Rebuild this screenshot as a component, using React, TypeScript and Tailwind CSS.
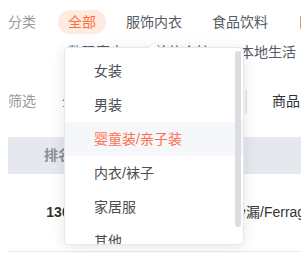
const FONT = { fontFamily: '"Liberation Sans", "Noto Sans CJK SC", sans-serif' };

const rowOne = ["服饰内衣", "食品饮料", "日用百货"];
const rowTwo = ["数码家电", "美妆个护", "本地生活"];
const options = ["女装", "男装", "婴童装/亲子装", "内衣/袜子", "家居服", "其他"];

export default function App() {
  return (
    <div className="relative h-[253px] w-[301px] overflow-hidden bg-white text-[14px]" style={FONT}>
      <div className="w-[420px] px-2 pt-[10px]">
        {/* 分类 */}
        <div className="flex">
          <div className="w-[50px] leading-6 text-[#999]">分类</div>
          <div className="flex flex-col gap-[6px]">
            <div className="flex gap-[10px]">
              <span className="h-6 rounded-full bg-[#fdebe2] px-[10px] leading-6 text-[#ff6f3d]">全部</span>
              {rowOne.map((c) => (
                <span key={c} className="h-6 px-[10px] leading-6 text-[#555a62]">
                  {c}
                </span>
              ))}
            </div>
            <div className="flex gap-[10px]">
              {rowTwo.map((c) => (
                <span key={c} className="h-6 px-[10px] leading-6 text-[#555a62]">
                  {c}
                </span>
              ))}
            </div>
          </div>
        </div>

        {/* 筛选 */}
        <div className="mt-[24px] flex h-[26px] items-center">
          <div className="w-[54px] text-[#999]">筛选</div>
          <div className="w-[183px] text-[#606266]">全部商品</div>
          <div className="h-[25px] w-[2px] rounded-full bg-[#e8eaee]" />
          <div className="ml-[25px] text-[#303133]">商品：</div>
        </div>

        {/* 表格 */}
        <div className="mt-[23px]">
          <div className="flex h-[37px] items-center bg-[#e5e9ef] font-bold text-[#8a919b]">
            <div className="w-[100px] text-center">排名</div>
            <div className="flex-1 pl-[20px]">商品名称</div>
          </div>
          <div className="flex h-[78px] items-center border-b border-[#e6e9ee] text-[#333]">
            <div className="w-[100px] text-center font-bold">130</div>
            <div className="flex-1 whitespace-nowrap pl-[96px]">经典沙漏/Ferragamo</div>
          </div>
        </div>
      </div>

      {/* 下拉菜单 */}
      <div className="absolute left-[64px] top-[47px] h-[198px] w-[180px] rounded-[4px] border border-[#e4e7ed] bg-white shadow-[0_2px_14px_rgba(0,0,0,0.1)]">
        <div className="absolute -top-[6px] left-[83px] h-0 w-0 border-x-[6px] border-b-[6px] border-x-transparent border-b-[#e4e7ed]" />
        <div className="absolute -top-[5px] left-[84px] h-0 w-0 border-x-[5px] border-b-[5px] border-x-transparent border-b-white" />
        <div className="h-full overflow-hidden rounded-[4px]">
          <ul className="py-[6px]">
            {options.map((o, i) => (
              <li
                key={o}
                className={
                  i === 2
                    ? "h-[34px] bg-[#f5f7fa] pl-[29px] leading-[34px] text-[#ff6f4a]"
                    : "h-[34px] pl-[29px] leading-[34px] text-[#4a4d52]"
                }
              >
                {o}
              </li>
            ))}
          </ul>
        </div>
        <div className="absolute right-[2px] top-[3px] h-[176px] w-[6px] rounded-full bg-[#dcdde1]" />
      </div>
    </div>
  );
}
